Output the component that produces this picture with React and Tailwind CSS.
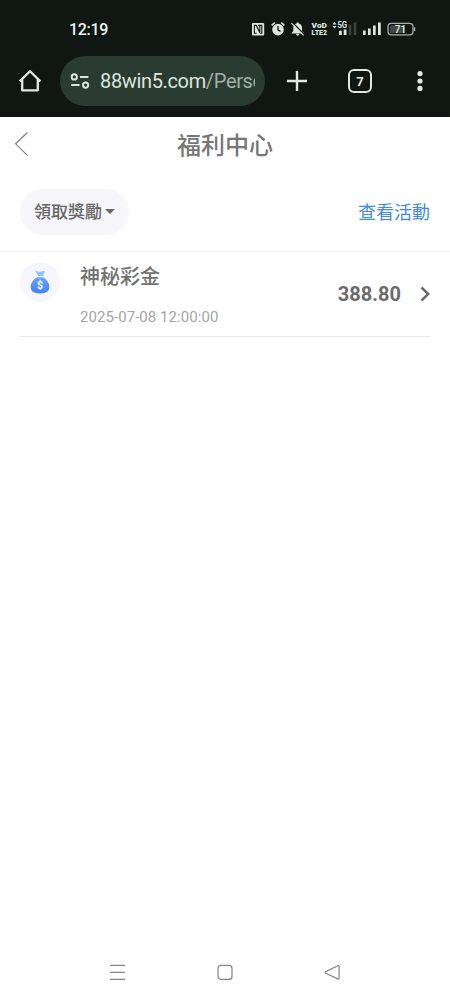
import React from 'react';

// Status bar icons (NFC, alarm, muted bell, VoLTE, 5G, signal, battery)
function StatusIcons() {
  return (
    <svg className="block font-['Roboto',sans-serif]" width="168" height="20" viewBox="250 19 168 20" fill="none">
      {/* NFC */}
      <rect x="252" y="23" width="12.2" height="12.6" rx="1" fill="#dfe4e0" />
      <path d="M256.6 33.2h-2.2v-7.8h1.8l3.6 7v-7M258 25.4h3.8v7.8h-2" stroke="#101713" strokeWidth="1.1" />

      {/* alarm */}
      <circle cx="278" cy="29.6" r="5.8" fill="#dfe4e0" />
      <path d="M271.6 25.4l3.2-2.8M284.4 25.4l-3.2-2.8" stroke="#dfe4e0" strokeWidth="1.4" />
      <path d="M278 26v3.8l2.5 1.7" stroke="#101713" strokeWidth="1.3" />

      {/* bell off */}
      <path
        d="M297.7 22.4c.8 0 1.2.5 1.2 1.1 2.2.6 3.2 2.3 3.2 4.4v3.2l1.6 1.8v.5h-12v-.5l1.6-1.8v-3.2c0-2.1 1-3.8 3.2-4.4 0-.6.4-1.1 1.2-1.1zM296.2 34.1h3c0 1-.7 1.6-1.5 1.6s-1.5-.6-1.5-1.6z"
        fill="#dfe4e0"
      />
      <path d="M292.4 22.6l12 12" stroke="#101713" strokeWidth="1.4" />
      <path d="M291.4 23.2l12.2 12.2" stroke="#dfe4e0" strokeWidth="1.2" />

      {/* VoLTE */}
      <text x="311.6" y="28" fontSize="8" fontWeight="900" fill="#dfe4e0" textLength="15.4" lengthAdjust="spacingAndGlyphs">VoD</text>
      <text x="311.6" y="35.2" fontSize="8" fontWeight="900" fill="#dfe4e0" textLength="15.4" lengthAdjust="spacingAndGlyphs">LTE2</text>

      {/* 5G */}
      <path d="M332.4 24.4l2.1-2.4 2.1 2.4zM332.4 26l2.1 2.4 2.1-2.4z" fill="#dfe4e0" />
      <text x="337.4" y="28.2" fontSize="8.6" fontWeight="700" fill="#dfe4e0" textLength="9.8" lengthAdjust="spacingAndGlyphs">5G</text>
      <path d="M339 30.8h2.8V35H339zM343.7 29.6h2.8V35h-2.8z" fill="#dfe4e0" />
      <path d="M348.8 25h2.5v10h-2.5zM353.7 22.6h2.6V35h-2.6z" fill="#3c433f" />

      {/* signal */}
      <path d="M363 30.4h2.7V35H363zM368 28.4h2.7V35H368zM373 25.6h2.7V35H373zM378 22.6h2.8V35H378z" fill="#dfe4e0" />

      {/* battery */}
      <rect x="388" y="23.3" width="25" height="11.6" rx="3.4" stroke="#a8aeaa" strokeWidth="1.3" />
      <path d="M391.4 25.2H405v7.8h-13.6a1.6 1.6 0 0 1-1.6-1.6v-4.6a1.6 1.6 0 0 1 1.6-1.6z" fill="#414844" />
      <path d="M414.6 27.3v3.8" stroke="#a8aeaa" strokeWidth="1.4" />
      <text x="400.5" y="32.8" fontSize="10" fontWeight="500" fill="#e4e8e5" textAnchor="middle">71</text>
    </svg>
  );
}

function BrowserBar() {
  return (
    <div className="flex h-[61px] items-start">
      <svg className="mt-[13px] ml-[18px] shrink-0" width="24" height="24" viewBox="0 0 24 24" fill="none">
        <path d="M1.6 12.4L12 2.2l10.4 10.2M4.2 10.4v10.9h15.6V10.4" stroke="#e2e7e3" strokeWidth="2.3" strokeLinejoin="round" />
      </svg>
      <div className="ml-[18px] flex h-[50px] w-[205px] shrink-0 items-center rounded-full bg-[#2a3c31] pr-[10px] pl-[10px]">
        <svg className="shrink-0" width="20" height="18" viewBox="0 0 20 18" fill="none" stroke="#d9e2db" strokeWidth="2">
          <circle cx="4.3" cy="4.9" r="2.6" />
          <path d="M10 4.9h8.4M1.2 13.1h8.4" />
          <circle cx="15.6" cy="13.1" r="2.6" />
        </svg>
        <div className="ml-[10px] flex-1 overflow-hidden text-[20px] leading-[28px] tracking-[-0.35px] whitespace-nowrap text-[#dce4de]">
          88win5.com<span className="text-[#a4b0a8]">/Personal</span>
        </div>
      </div>
      <svg className="mt-[15px] ml-[22px] shrink-0" width="20" height="20" viewBox="0 0 20 20">
        <path d="M10 0v20M0 10h20" stroke="#e2e7e3" strokeWidth="2.4" />
      </svg>
      <div className="mt-[13px] ml-[41px] flex h-[24px] w-[24px] shrink-0 items-center justify-center rounded-[6px] border-[2.5px] border-[#e2e7e3] text-[13px] leading-none font-bold text-[#e2e7e3]">
        7
      </div>
      <svg className="mt-[14px] ml-[44px] shrink-0" width="8" height="22" viewBox="0 0 8 22" fill="#e2e7e3">
        <circle cx="4" cy="3.6" r="2.6" />
        <circle cx="4" cy="11" r="2.6" />
        <circle cx="4" cy="18.4" r="2.6" />
      </svg>
    </div>
  );
}

function MoneyBag() {
  return (
    <svg width="40" height="40" viewBox="0 0 40 40">
      <defs>
        <linearGradient id="bag" x1="0" y1="0" x2="0" y2="1">
          <stop offset="0" stopColor="#67a7f4" />
          <stop offset="1" stopColor="#4580fa" />
        </linearGradient>
      </defs>
      <path d="M15.2 8.6c1.7-.2 2.4 1.4 3.9 1.3 1.5-.1 2.6-1.3 5.7-.8-.3 2.2-1.2 3.7-2.1 5.1h-4.4c-1.2-1.8-2.2-3.5-3.1-5.6z" fill="#91c4f8" />
      <path d="M17.3 15.2h5.4c3.8 1.6 6.6 5.6 6.6 9.8 0 4.5-3.2 6.4-9.3 6.4s-9.3-1.9-9.3-6.4c0-4.2 2.8-8.2 6.6-9.8z" fill="url(#bag)" />
      <text x="20" y="26.7" fontSize="10.5" fontWeight="700" fill="#fff" textAnchor="middle">$</text>
    </svg>
  );
}

function NavigationBar() {
  return (
    <div className="mt-auto flex h-[56px] items-center justify-between px-[109px]">
      <svg width="17" height="16" viewBox="0 0 17 16" stroke="#858585" strokeWidth="1.2">
        <path d="M1 1.4h15M1 8.4h15M1 15.4h15" />
      </svg>
      <svg width="16" height="16" viewBox="0 0 16 16" fill="none" stroke="#858585" strokeWidth="1.2">
        <rect x="1" y="1.4" width="14" height="14" rx="3" />
      </svg>
      <svg width="17" height="16" viewBox="0 0 17 16" fill="none" stroke="#858585" strokeWidth="1.2">
        <path d="M1.8 7.6L13.8 1.7q1.3-.5 1.3.8v11.6q0 1.3-1.3.8L1.8 9.2q-1.4-.8 0-1.6z" />
      </svg>
    </div>
  );
}

export default function App() {
  return (
    <div className="flex h-[1000px] w-[450px] flex-col bg-white font-['Roboto','Noto_Sans_CJK_TC',sans-serif]">
      <div className="h-[117px] shrink-0 bg-[#101713]">
        <div className="flex h-[56px] items-start justify-between pr-[32px] pl-[69px]">
          <span className="mt-[20px] text-[16px] leading-[20px] font-medium tracking-[-0.3px] text-[#f2f5f3]">12:19</span>
          <div className="mt-[19px]">
            <StatusIcons />
          </div>
        </div>
        <BrowserBar />
      </div>

      {/* Judul halaman */}
      <header className="grid h-[56px] grid-cols-[1fr_auto_1fr] items-center">
        <svg className="mb-[2px] ml-[14px]" width="16" height="26" viewBox="0 0 16 26" fill="none">
          <path d="M13.4 1.5L1.6 12.8l11.8 11.6" stroke="#777" strokeWidth="1.1" />
        </svg>
        <h1 className="mt-[2px] text-[24px] leading-[36px] font-medium text-[#777]">福利中心</h1>
      </header>

      <div className="flex h-[79px] items-center justify-between border-b border-[#f0f0f2] px-5">
        <button className="flex h-[46px] w-[109px] items-center rounded-full bg-[#f6f6fb] pt-[1px] pl-[14px] text-[17px] font-medium text-[#686868]">
          領取獎勵
          <svg className="mb-[2px] ml-[3px]" width="10" height="5" viewBox="0 0 10 5" fill="#686868">
            <path d="M0 0h10L5 5z" />
          </svg>
        </button>
        <a className="text-[18px] text-[#428ae3]">查看活動</a>
      </div>

      <div className="mx-5 flex h-[85px] border-b border-[#e9e9e9]">
        <div className="mt-[10px] h-[40px] w-[40px] rounded-full bg-[#f6f6fb]">
          <MoneyBag />
        </div>
        <div className="ml-5 flex flex-col">
          <div className="mt-[10px] text-[20px] leading-[30px] font-medium text-[#727272]">神秘彩金</div>
          <div className="mt-[15px] text-[15px] leading-[20px] tracking-[0.06px] text-[#a5a5a5]">2025-07-08 12:00:00</div>
        </div>
        <div className="ml-auto flex items-center text-[20px] font-bold text-[#6b6b6b]">
          388.80
          <svg className="ml-[19px]" width="10" height="16" viewBox="0 0 10 16" fill="none">
            <path d="M1.5 1.5L8.3 8l-6.8 6.5" stroke="#6b6b6b" strokeWidth="2.5" />
          </svg>
        </div>
      </div>

      <NavigationBar />
    </div>
  );
}
